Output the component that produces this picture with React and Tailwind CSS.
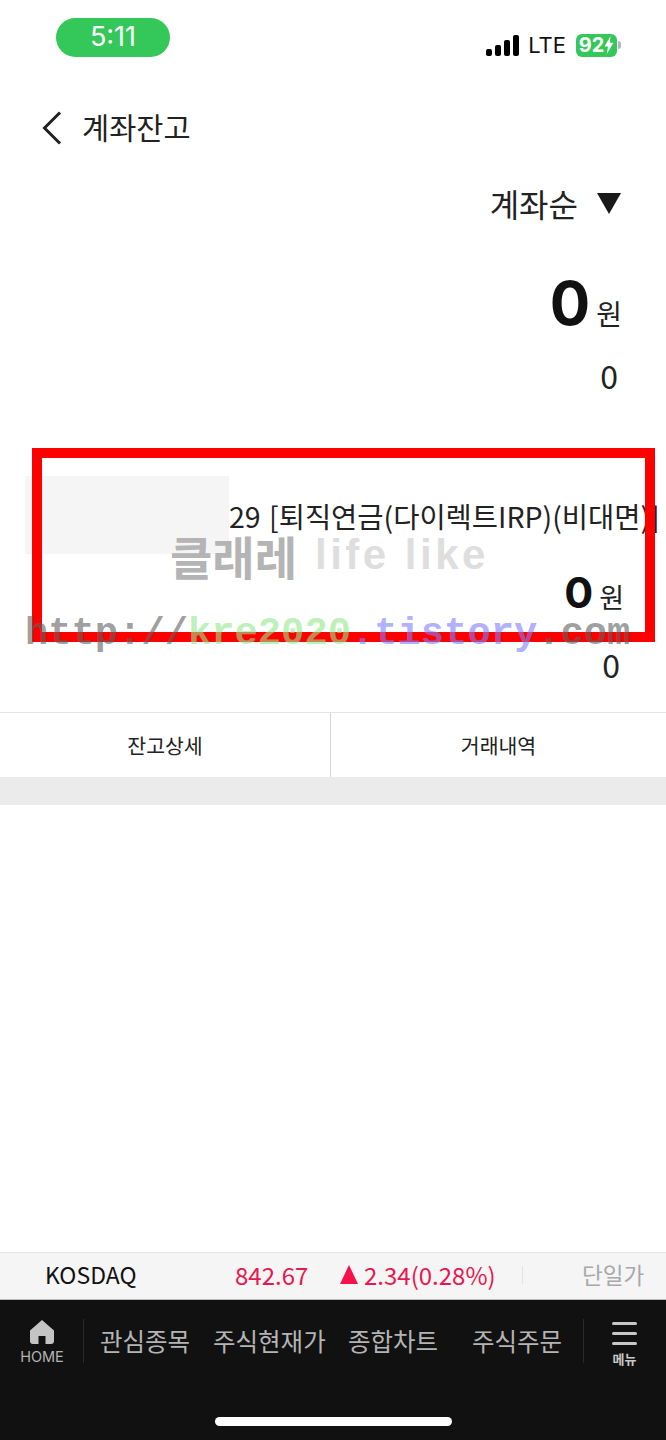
import React from 'react';

const kr = { fontFamily: '"Noto Sans CJK KR", "Noto Sans", sans-serif' };

const StatusBar = () => (
  <div className="flex h-[70px] items-start justify-between pl-[56px] pr-[45px]">
    <div className="mt-[18px] flex h-[39px] w-[114px] items-center justify-center rounded-full bg-[#34c759] text-[27px] text-white" style={{ fontFamily: 'Inter, sans-serif' }}>
      5:11
    </div>
    <div className="mt-[33px] flex h-[24px] items-center">
      <div className="flex items-end gap-[3px]">
        <span className="h-[7px] w-[6px] rounded-[2px] bg-black" />
        <span className="h-[11px] w-[6px] rounded-[2px] bg-black" />
        <span className="h-[16px] w-[6px] rounded-[2px] bg-black" />
        <span className="h-[21px] w-[6px] rounded-[2px] bg-black" />
      </div>
      <span className="ml-[9px] text-[22px] leading-none text-[#111]" style={{ fontFamily: 'Inter, sans-serif' }}>LTE</span>
      <div className="ml-[10px] flex h-[23px] w-[41px] items-center justify-center rounded-[6px] bg-[#34c759] text-[20px] font-bold leading-none text-white" style={{ fontFamily: 'Inter, sans-serif' }}>
        92
        <svg width="10" height="18" viewBox="0 0 10 18" fill="white">
          <path d="M6.5 0 0.5 10.5H4L2.8 18 9.5 6.8H5.8Z" />
        </svg>
      </div>
      <span className="ml-px h-[8px] w-[3px] rounded-r-full bg-[#b5b5b5]" />
    </div>
  </div>
);

const Header = () => (
  <div className="mt-[30px] flex h-[56px] items-center pl-[42px]">
    <svg width="20" height="34" viewBox="0 0 20 34" fill="none" stroke="#222" strokeWidth="3">
      <path d="M18 1.5 2.5 17 18 32.5" />
    </svg>
    <span className="ml-[20px] pb-[4px] text-[29.5px] text-[#222]">계좌잔고</span>
  </div>
);

const Balance = ({ numberClass, unitClass, children }) => (
  <div className="flex items-baseline justify-end">
    <span className={numberClass} style={{ fontFamily: 'Inter, sans-serif' }}>{children}</span>
    <span className={unitClass}>원</span>
  </div>
);

const Watermark = () => (
  <>
    <div className="absolute left-[32px] top-[448px] h-[194px] w-[623px] border-[10px] border-[#ff0000]" />
    <div className="absolute left-[170px] top-[527px] flex items-center text-[46px] font-bold leading-[56px]">
      <span className="text-[#b4b4b4]">클래레</span>
      <span className="ml-[18px] text-[42px] tracking-[3.5px] text-[#dedede]" style={{ fontFamily: '"Liberation Sans", sans-serif' }}>life like</span>
    </div>
    <div className="absolute left-[25px] top-[611px] whitespace-nowrap text-[38.8px] font-bold leading-[46px]" style={{ fontFamily: '"Liberation Mono", monospace' }}>
      <span className="text-[#5f5f5f]/60">http://</span>
      <span className="text-[#92e88c]/60">kre2020</span>
      <span className="text-[#7d7dff]/60">.tistory</span>
      <span className="text-[#5f5f5f]/60">.com</span>
    </div>
  </>
);

const Ticker = () => (
  <div className="flex h-[47px] items-center border-t border-[#e4e4e4] bg-[#f5f5f5] pb-[3px] text-[24px] leading-none">
    <span className="ml-[45px] w-[190px] text-[23px] text-[#111]">KOSDAQ</span>
    <span className="w-[105px] text-[#e8174f]">842.67</span>
    <svg width="18" height="19" viewBox="0 0 18 19" fill="#f5124b"><path d="M9 0 18 19H0Z" /></svg>
    <span className="ml-[6px] w-[158px] text-[#e8174f]">2.34(0.28%)</span>
    <span className="h-[18px] w-px bg-[#e2e2e2]" />
    <span className="ml-[59px] text-[22.5px] text-[#a8a8a8]">단일가</span>
  </div>
);

const NavBar = () => (
  <div className="h-[141px] border-t border-[#bbb] bg-[#111111]">
    <div className="flex h-[86px] items-start pt-[19px] text-[#b4b4b4]">
      <div className="flex w-[84px] flex-col items-center">
        <svg width="26" height="26" viewBox="0 0 26 26" fill="#c4c4c4">
          <path d="M13 1 25 11.5V22a3 3 0 0 1-3 3h-5.5v-8h-7v8H4a3 3 0 0 1-3-3V11.5Z" />
        </svg>
        <span className="mt-[3px] text-[14.5px] leading-[18px]" style={{ fontFamily: 'Inter, sans-serif' }}>HOME</span>
      </div>
      <span className="-ml-px h-[44px] w-px bg-[#2a2a2a]" />
      <div className="flex h-[44px] items-center whitespace-nowrap text-[24.5px]">
        <span className="ml-[16px] w-[113px]">관심종목</span>
        <span className="w-[135px]">주식현재가</span>
        <span className="w-[124px]">종합차트</span>
        <span className="w-[111px]">주식주문</span>
      </div>
      <span className="h-[44px] w-px bg-[#2a2a2a]" />
      <div className="ml-[28px] flex flex-col items-center">
        <div className="mt-[3px] flex w-[25px] flex-col gap-[7px]">
          <span className="h-[3px] rounded-full bg-[#c8c8c8]" />
          <span className="h-[3px] rounded-full bg-[#c8c8c8]" />
          <span className="h-[3px] rounded-full bg-[#c8c8c8]" />
        </div>
        <span className="mt-[5px] text-[13px] font-bold leading-[18px] text-[#c8c8c8]">메뉴</span>
      </div>
    </div>
    <div className="mt-[31px] flex justify-center">
      <span className="ml-[1px] h-[9px] w-[237px] rounded-full bg-white" />
    </div>
  </div>
);

export default function App() {
  return (
    <div className="relative flex h-[1440px] w-[666px] flex-col overflow-hidden bg-white" style={kr}>
      <StatusBar />
      <Header />

      <div className="mt-[25px] flex items-center justify-end pr-[45px] text-[#222]">
        <span className="pl-[1px] text-[32px] leading-[44px]">계좌순</span>
        <svg className="ml-[19px]" width="24" height="21" viewBox="0 0 24 21" fill="#1a1a1a"><path d="M0 0H24L12 21Z" /></svg>
      </div>

      <div className="mt-[38px] pr-[44px]">
        <Balance numberClass="text-[60px] font-bold leading-[80px] text-[#111]" unitClass="ml-[6px] text-[28px] text-[#222]">0</Balance>
        <p className="mt-[10px] pr-[4px] text-right text-[32px] leading-[44px] text-[#222]">0</p>
      </div>

      {/* account card */}
      <div className="mt-[79px] pr-[42px]">
        <div className="flex h-[78px] items-start">
          <div className="ml-[25px] h-[78px] w-[204px] shrink-0 bg-[#f5f5f5]" />
          <span className="mt-[18px] whitespace-nowrap text-[28.5px] leading-[44px] text-[#222]">
            29 <span className="ml-[2px]">[퇴직연금(다이렉트IRP)(비대면)]</span>
          </span>
        </div>
        <div className="mt-[8px]">
          <Balance numberClass="text-[43px] font-bold leading-[60px] text-[#111]" unitClass="ml-[6px] text-[27px] text-[#222]">0</Balance>
        </div>
        <p className="mt-[20px] pr-[4px] text-right text-[32px] leading-[44px] text-[#222]">0</p>
      </div>

      <div className="mt-[26px] flex h-[65px] border-t border-[#e4e4e4] text-[20.5px] text-[#222]">
        <div className="flex w-[331px] items-center justify-center border-r border-[#d8d8d8]">잔고상세</div>
        <div className="flex flex-1 items-center justify-center">거래내역</div>
      </div>
      <div className="h-[28px] bg-[#ebebeb]" />

      <div className="flex-1" />
      <Ticker />
      <NavBar />

      <Watermark />
    </div>
  );
}
